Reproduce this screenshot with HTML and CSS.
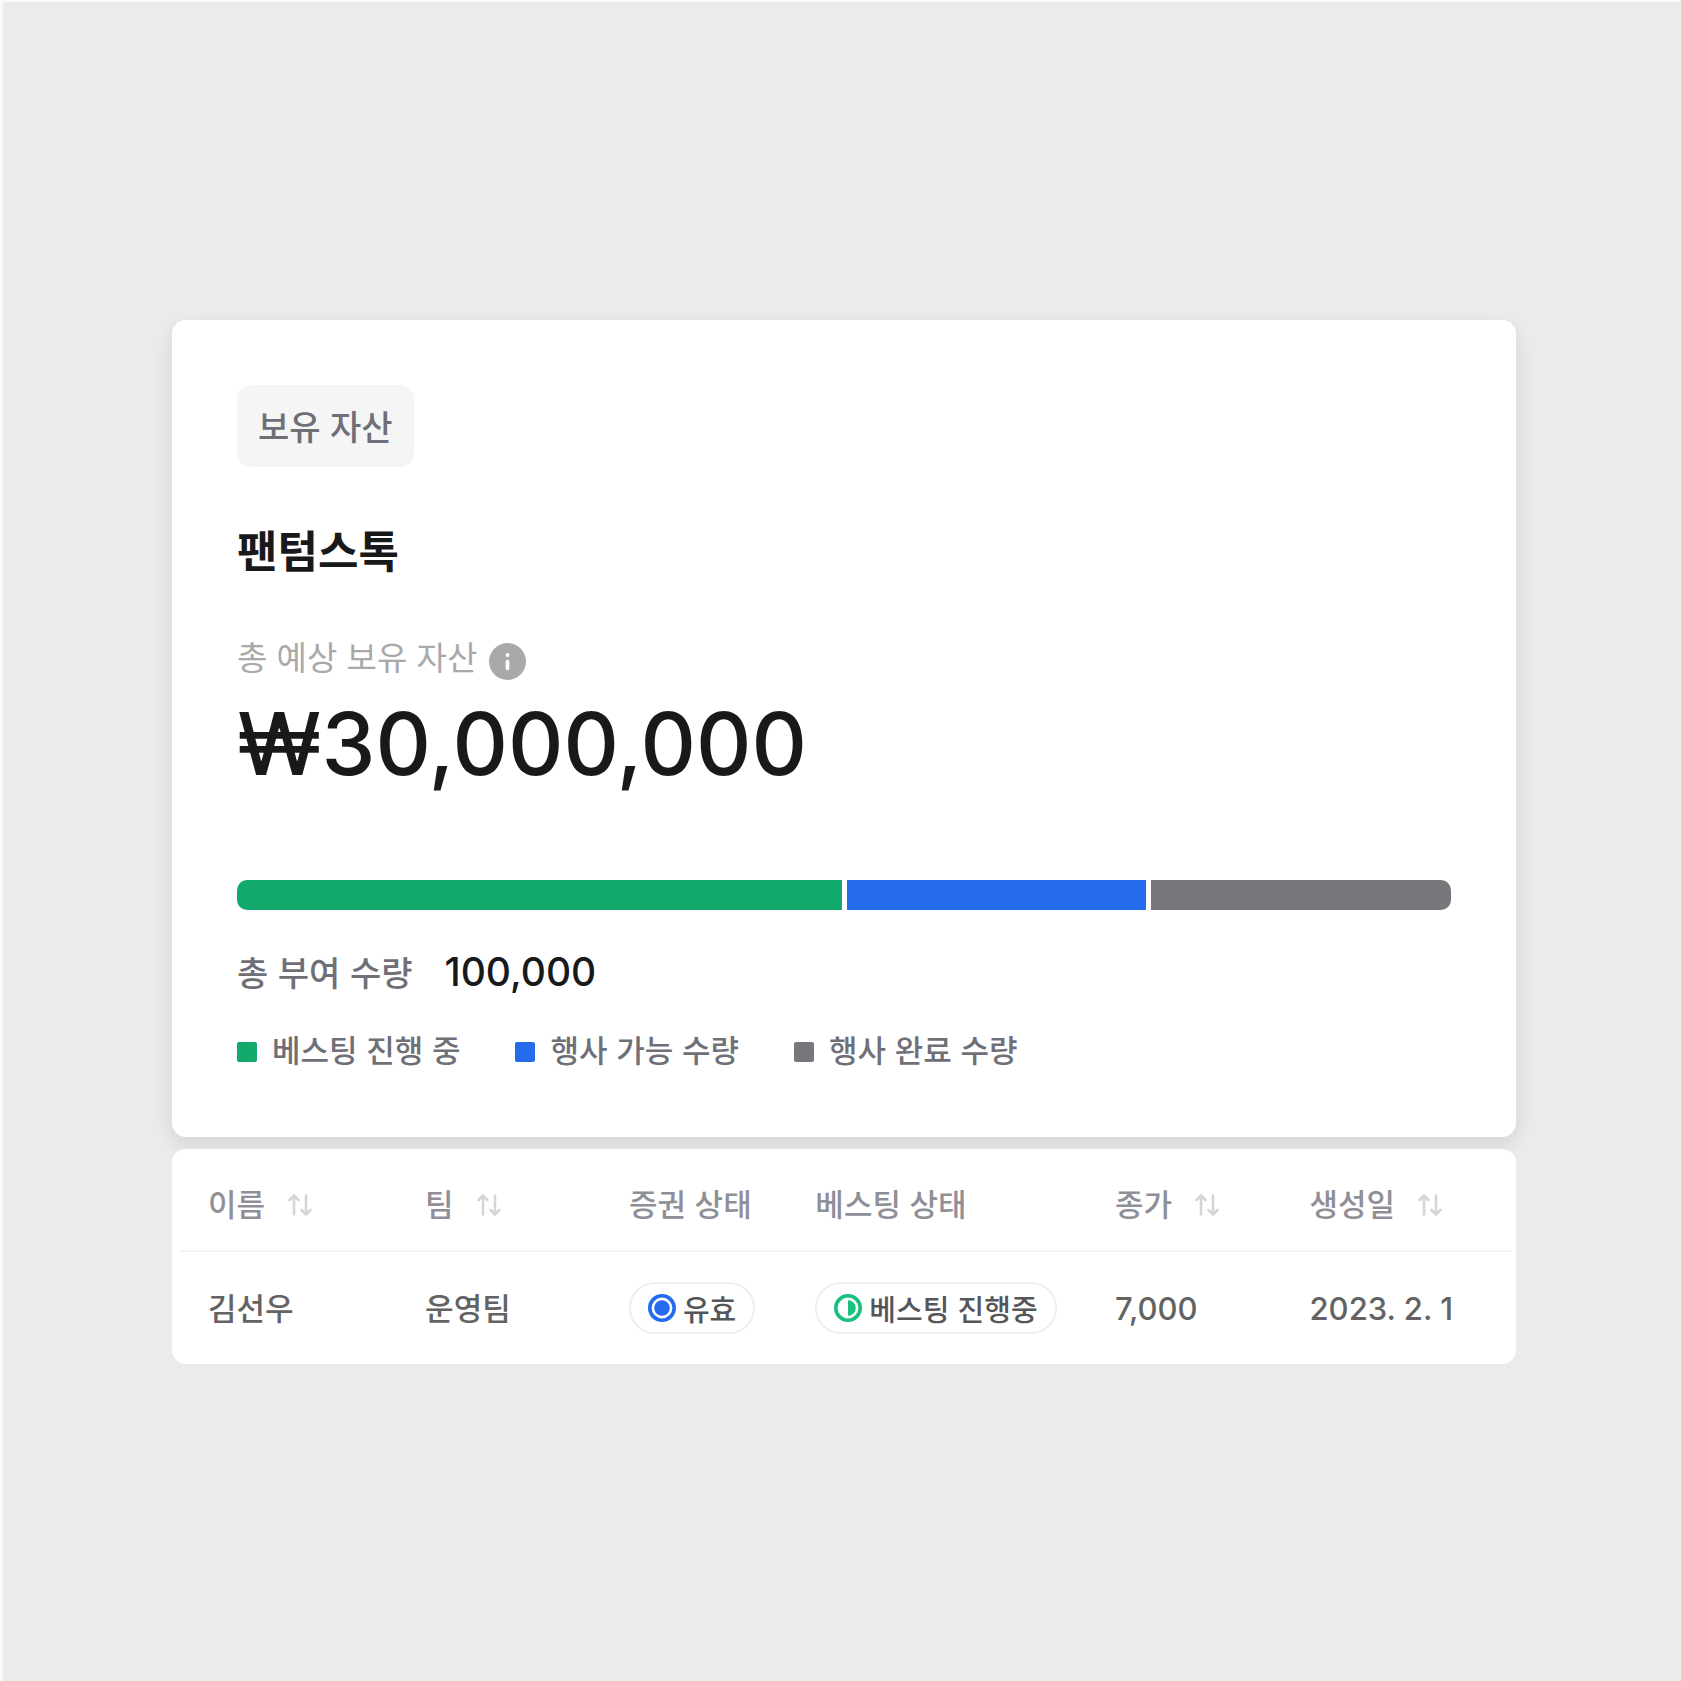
FILE: index.html
```html
<!DOCTYPE html>
<html lang="ko">
<head>
    <meta charset="UTF-8">
    <meta name="viewport" content="width=device-width, initial-scale=1.0">
    <title>보유 자산</title>
    <link rel="stylesheet" href="styles.css">
</head>
<body>
    <svg class="sprite" aria-hidden="true">
        <symbol id="icon-sort" viewBox="0 0 24 22">
            <path d="M6 20.5V1.5M1.5 6L6 1.5L10.5 6M18 1.5V20.5M13.5 16L18 20.5L22.5 16" fill="none" stroke="currentColor" stroke-width="2.6" stroke-linecap="round" stroke-linejoin="round"/>
        </symbol>
    </svg>

    <main class="page">
        <section class="asset-card">
            <span class="tag">보유 자산</span>
            <h1 class="asset-title">팬텀스톡</h1>

            <div class="asset-label">
                <span>총 예상 보유 자산</span>
                <button type="button" class="info-btn" aria-label="안내">
                    <svg viewBox="0 0 37 37" width="37" height="37">
                        <circle cx="18.5" cy="18.5" r="18.5" fill="#a9a9a9"/>
                        <circle cx="18.5" cy="12" r="2" fill="#fff"/>
                        <path d="M18.5 18.5V25.5" stroke="#fff" stroke-width="3.6" stroke-linecap="round"/>
                    </svg>
                </button>
            </div>
            <p class="asset-amount">₩30,000,000</p>

            <div class="bar">
                <div class="bar-part vesting"></div>
                <div class="bar-part available"></div>
                <div class="bar-part done"></div>
            </div>

            <div class="total">
                <span class="total-label">총 부여 수량</span>
                <span class="total-value">100,000</span>
            </div>

            <ul class="legend">
                <li><i class="dot vesting"></i>베스팅 진행 중</li>
                <li><i class="dot available"></i>행사 가능 수량</li>
                <li><i class="dot done"></i>행사 완료 수량</li>
            </ul>
        </section>

        <section class="table-card">
            <table>
                <thead>
                    <tr>
                        <th class="col-name">이름<button type="button" class="sort-btn" aria-label="이름 정렬"><svg width="24" height="22"><use href="#icon-sort"/></svg></button></th>
                        <th class="col-team">팀<button type="button" class="sort-btn" aria-label="팀 정렬"><svg width="24" height="22"><use href="#icon-sort"/></svg></button></th>
                        <th class="col-status">증권 상태</th>
                        <th class="col-vesting">베스팅 상태</th>
                        <th class="col-price">종가<button type="button" class="sort-btn" aria-label="종가 정렬"><svg width="24" height="22"><use href="#icon-sort"/></svg></button></th>
                        <th class="col-date">생성일<button type="button" class="sort-btn" aria-label="생성일 정렬"><svg width="24" height="22"><use href="#icon-sort"/></svg></button></th>
                    </tr>
                </thead>
                <tbody>
                    <tr>
                        <td>김선우</td>
                        <td>운영팀</td>
                        <td>
                            <span class="badge">
                                <svg viewBox="0 0 28 28" width="28" height="28">
                                    <circle cx="14" cy="14" r="12.2" fill="none" stroke="#246bee" stroke-width="3.6"/>
                                    <circle cx="14" cy="14" r="7.8" fill="#246bee"/>
                                </svg>
                                유효
                            </span>
                        </td>
                        <td>
                            <span class="badge">
                                <svg viewBox="0 0 28 28" width="28" height="28">
                                    <circle cx="14" cy="14" r="12.2" fill="none" stroke="#1bbf7e" stroke-width="3.6"/>
                                    <path d="M14 6.2A7.8 7.8 0 0 1 14 21.8Z" fill="#1bbf7e"/>
                                </svg>
                                베스팅 진행중
                            </span>
                        </td>
                        <td class="number">7,000</td>
                        <td class="number">2023. 2. 1</td>
                    </tr>
                </tbody>
            </table>
        </section>
    </main>
</body>
</html>
```

FILE: styles.css
```css
* {
    box-sizing: border-box;
}

body {
    margin: 0;
    background-color: #ebebeb;
    color: #18191b;
    font-family: "Noto Sans CJK KR", sans-serif;
    font-weight: 500;
}

.sprite {
    display: none;
}

.page {
    display: flex;
    flex-direction: column;
    justify-content: center;
    gap: 12px;
    min-height: 100vh;
    padding: 0 165px 0 169px;
    border-top: 2px solid #f8f8f8;
    border-left: 3px solid #f8f8f8;
}

/* summary card */
.asset-card {
    display: flex;
    flex-direction: column;
    align-items: flex-start;
    padding: 65px 65px 64px;
    background-color: #fff;
    border-radius: 14px;
    box-shadow: 0 8px 20px rgba(0, 0, 0, 0.1);
}

.tag {
    padding: 17px 21px;
    background-color: #f5f5f5;
    border-radius: 14px;
    color: #6f6f78;
    font-size: 34px;
    line-height: 48px;
}

.asset-title {
    margin: 54px 0 0;
    font-size: 44px;
    font-weight: 700;
    line-height: 56px;
}

.asset-label {
    display: flex;
    align-items: flex-end;
    gap: 12px;
    margin-top: 55px;
    color: #a9a9a9;
    font-size: 33px;
    font-weight: 400;
    line-height: 48px;
}

.info-btn,
.sort-btn {
    padding: 0;
    border: none;
    background: none;
    cursor: pointer;
}

.info-btn svg {
    display: block;
}

.asset-amount {
    margin: 12px 0 0;
    font-family: Inter, "Noto Sans CJK KR", sans-serif;
    font-size: 86px;
    line-height: 104px;
}

.bar {
    display: flex;
    gap: 5px;
    align-self: stretch;
    height: 30px;
    margin-top: 84px;
    border-radius: 10px;
    overflow: hidden;
}

.bar-part {
    flex: 60;
}

.bar-part.vesting {
    flex: 121;
}

.vesting {
    background-color: #12a96d;
}

.available {
    background-color: #246bee;
}

.done {
    background-color: #77787b;
}

.total {
    display: flex;
    align-items: center;
    gap: 32px;
    margin-top: 38px;
    font-size: 34px;
    line-height: 48px;
}

.total-label {
    color: #6f6f78;
}

.total-value {
    font-family: Inter, sans-serif;
    font-size: 39px;
}

.legend {
    display: flex;
    gap: 55px;
    margin: 29px 0 0;
    padding: 0;
    list-style: none;
    color: #6f6f78;
    font-size: 31px;
    line-height: 48px;
}

.legend li {
    display: flex;
    align-items: center;
    gap: 15px;
}

.dot {
    width: 20px;
    height: 20px;
    margin-top: 6px;
    border-radius: 2px;
}

/* holders table */
.table-card {
    padding: 0 4px 0 8px;
    background-color: #fff;
    border-radius: 14px;
}

table {
    width: 100%;
    border-collapse: collapse;
    table-layout: fixed;
    font-size: 31px;
    line-height: 48px;
}

th,
td {
    padding: 0 0 0 28px;
    text-align: left;
    white-space: nowrap;
}

th {
    height: 102px;
    padding-top: 8px;
    border-bottom: 2px solid #f5f5f5;
    color: #8f8f98;
    font-weight: 500;
}

td {
    height: 113px;
    padding-bottom: 2px;
    color: #636363;
}

.col-name {
    width: 16.3%;
}

.col-team {
    width: 15.3%;
}

.col-status {
    width: 14%;
}

.col-vesting {
    width: 22.5%;
}

.col-price {
    width: 14.6%;
}

.sort-btn {
    margin-left: 23px;
    color: #d5d5d8;
    line-height: 22px;
}

.number {
    padding-top: 4px;
    font-family: Inter, sans-serif;
}

.badge {
    display: inline-flex;
    align-items: center;
    gap: 7px;
    padding: 0 17px;
    border: 2px solid #eeeff0;
    border-radius: 26px;
    color: #55565a;
    font-size: 29px;
    vertical-align: middle;
}
```
